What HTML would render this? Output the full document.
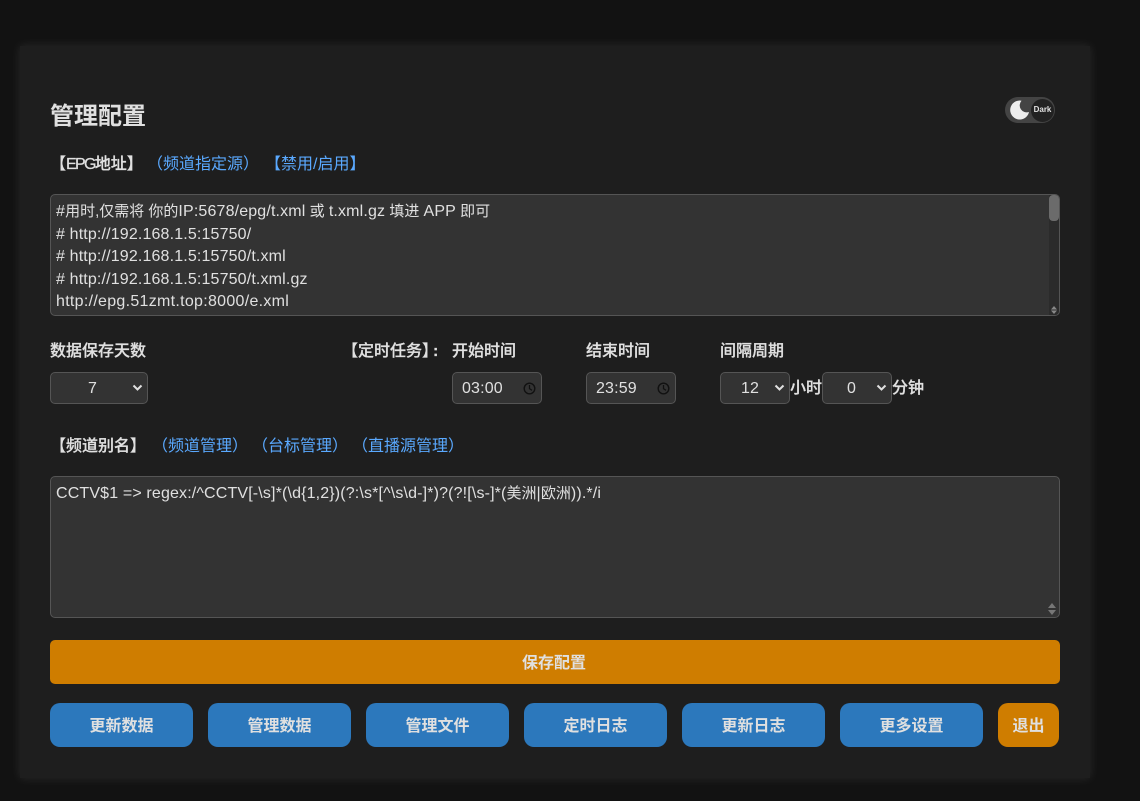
<!DOCTYPE html>
<html lang="zh"><head><meta charset="utf-8"><title>管理配置</title>
<style>
*{box-sizing:border-box}
html,body{margin:0;padding:0;width:1140px;height:801px;overflow:hidden;background:#121212;font-family:"Liberation Sans","Noto Sans CJK SC",sans-serif;color:#e0e0e0}
.card{position:absolute;left:20px;top:46px;width:1070px;height:732px;background:#1e1e1e;box-shadow:0 0 10px rgba(255,255,255,.1)}
.a{position:absolute;white-space:nowrap}
.l{font-size:16px;font-weight:500;line-height:20px;color:#e0e0e0;-webkit-text-stroke:.25px #e0e0e0}
.b{color:#5aa9ff;font-weight:400;-webkit-text-stroke:0}
.ta{position:absolute;left:50px;width:1010px;background:#333;border:1px solid #555;border-radius:5px;font-size:15px;line-height:22.5px;padding:6px 5px 5px;color:#e0e0e0;white-space:pre;overflow:hidden}
.ta i{font-style:normal;font-size:16px;letter-spacing:.15px;line-height:20px}
.sel{position:absolute;top:372px;height:32px;background:#333;border:1px solid #555;border-radius:5px;font-size:16px;line-height:31px;color:#e0e0e0}
.sel span{position:absolute;top:0;letter-spacing:.15px}
.sel svg{position:absolute;top:11px}
.btn{position:absolute;top:703px;height:44px;width:143px;background:#2c78bc;border-radius:10px;color:#e0e0e0;font-size:16px;font-weight:bold;text-align:center;line-height:47px}
</style></head><body>
<div class="card"></div>
<div class="a" style="left:50px;top:101px;font-size:24px;font-weight:bold;line-height:32px;color:#e0e0e0">管理配置</div>

<div class="a" style="left:1005px;top:97px;width:50px;height:26px;border-radius:13px;background:#444"></div>
<svg class="a" style="left:1009px;top:100px" width="21" height="20" viewBox="0 0 21 20"><path d="M12.5 .7A9.5 9.5 0 1 0 20 12A7 7 0 0 1 12.5 .7Z" fill="#eee"/></svg>
<div class="a" style="left:1031px;top:99px;width:23px;height:23px;border-radius:50%;background:#222"></div>
<div class="a" style="left:1031px;top:99px;width:23px;text-align:center;font-size:8px;font-weight:bold;line-height:22px;color:#e0e0e0">Dark</div>

<div class="a l" style="left:50px;top:155px">【<span style="letter-spacing:-1.7px">EPG</span>地址】</div>
<div class="a l b" style="left:147px;top:155px">（频道指定源）</div>
<div class="a l b" style="left:265px;top:155px">【禁用/启用】</div>

<div class="ta" style="top:194px;height:122px"><i>#</i>用时,仅需将 你的<i>IP:5678/epg/t.xml</i> 或 <i>t.xml.gz</i> 填进 <i>APP</i> 即可
<i># http://192.168.1.5:15750/</i>
<i># http://192.168.1.5:15750/t.xml</i>
<i># http://192.168.1.5:15750/t.xml.gz</i>
<i style="letter-spacing:.29px">http://epg.51zmt.top:8000/e.xml</i></div>
<div class="a" style="left:1049px;top:195px;width:10px;height:120px;background:#2b2b2b;border-radius:0 4px 4px 0"></div>
<div class="a" style="left:1049px;top:195px;width:10px;height:26px;background:#6b6b6b;border-radius:4px"></div>
<svg class="a" style="left:1050px;top:305px" width="8" height="10" viewBox="0 0 8 10"><path d="M4 1L7 4.5H1ZM1 5.5H7L4 9Z" fill="#888"/></svg>

<div class="a l" style="left:50px;top:342px">数据保存天数</div>
<div class="a l" style="left:342px;top:342px">【定时任务】</div>
<div class="a l" style="left:433px;top:342px;font-weight:bold">:</div>
<div class="a l" style="left:452px;top:342px">开始时间</div>
<div class="a l" style="left:586px;top:342px">结束时间</div>
<div class="a l" style="left:720px;top:342px">间隔周期</div>

<div class="sel" style="left:50px;width:98px"><span style="left:37px">7</span><svg style="left:81px" width="11" height="8" viewBox="0 0 11 8"><path d="M1.5 1.5L5.5 5.5L9.5 1.5" fill="none" stroke="#e0e0e0" stroke-width="2"/></svg></div>

<div class="sel" style="left:452px;width:90px"><span style="left:9px">03:00</span><svg style="left:70px;top:9px" width="13" height="13" viewBox="0 0 13 13"><circle cx="6.5" cy="6.5" r="5.3" fill="none" stroke="#111" stroke-width="1.4"/><path d="M6.5 3V6.7L9 8.3" fill="none" stroke="#111" stroke-width="1.3"/></svg></div>
<div class="sel" style="left:586px;width:90px"><span style="left:9px">23:59</span><svg style="left:70px;top:9px" width="13" height="13" viewBox="0 0 13 13"><circle cx="6.5" cy="6.5" r="5.3" fill="none" stroke="#111" stroke-width="1.4"/><path d="M6.5 3V6.7L9 8.3" fill="none" stroke="#111" stroke-width="1.3"/></svg></div>

<div class="sel" style="left:720px;width:70px"><span style="left:20px">12</span><svg style="left:53px" width="11" height="8" viewBox="0 0 11 8"><path d="M1.5 1.5L5.5 5.5L9.5 1.5" fill="none" stroke="#e0e0e0" stroke-width="2"/></svg></div>
<div class="a l" style="left:790px;top:379px">小时</div>
<div class="sel" style="left:822px;width:70px"><span style="left:24px">0</span><svg style="left:53px" width="11" height="8" viewBox="0 0 11 8"><path d="M1.5 1.5L5.5 5.5L9.5 1.5" fill="none" stroke="#e0e0e0" stroke-width="2"/></svg></div>
<div class="a l" style="left:892px;top:379px">分钟</div>

<div class="a l" style="left:50px;top:437px">【频道别名】</div>
<div class="a l b" style="left:152px;top:437px">（频道管理）</div>
<div class="a l b" style="left:252px;top:437px">（台标管理）</div>
<div class="a l b" style="left:352px;top:437px">（直播源管理）</div>

<div class="ta" style="top:476px;height:142px"><i>CCTV$1 =&gt; regex:/^CCTV[-\s]*(\d{1,2})(?:\s*[^\s\d-]*)?(?![\s-]*(</i>美洲<i>|</i>欧洲<i>)).*/i</i></div>
<svg class="a" style="left:1047px;top:602px" width="10" height="14" viewBox="0 0 10 14"><path d="M5 1L9 6H1ZM1 8H9L5 13Z" fill="#777"/></svg>

<div class="a" style="left:50px;top:640px;width:1010px;height:44px;padding-right:2px;background:#cf7d00;border-radius:5px;color:#e0e0e0;font-size:16px;font-weight:bold;text-align:center;line-height:48px">保存配置</div>

<div class="btn" style="left:50px">更新数据</div>
<div class="btn" style="left:208px">管理数据</div>
<div class="btn" style="left:366px">管理文件</div>
<div class="btn" style="left:524px">定时日志</div>
<div class="btn" style="left:682px">更新日志</div>
<div class="btn" style="left:840px">更多设置</div>
<div class="btn" style="left:998px;width:61px;background:#cf7d00">退出</div>
</body></html>
